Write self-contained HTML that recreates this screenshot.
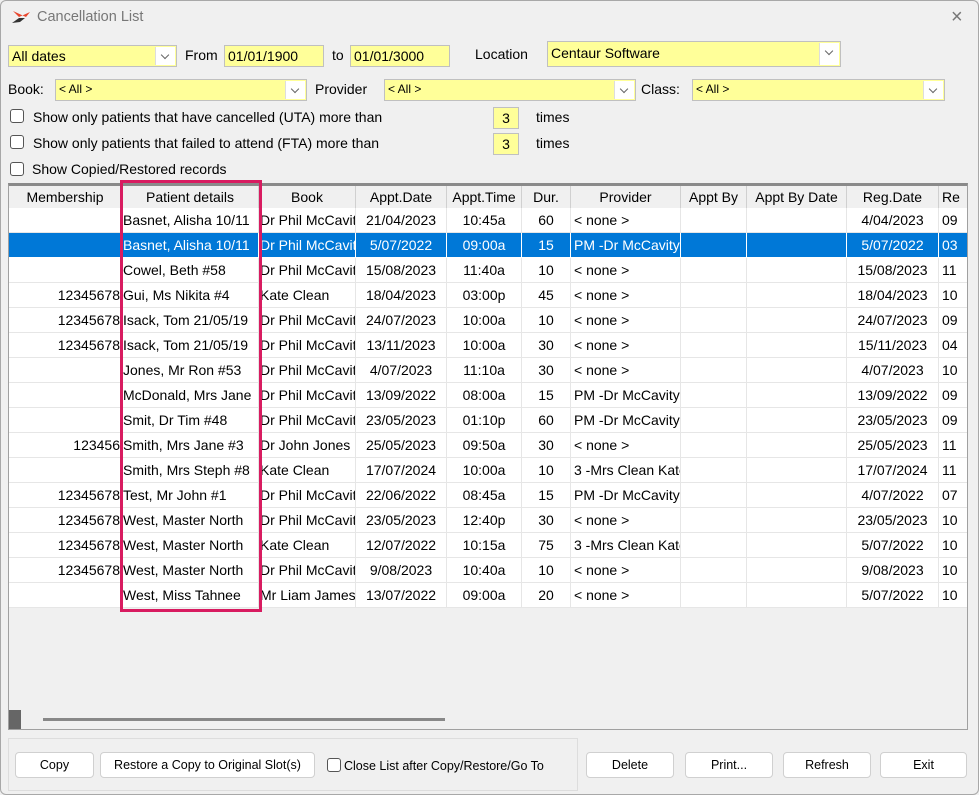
<!DOCTYPE html>
<html><head><meta charset="utf-8"><style>
*{box-sizing:border-box}
body{margin:0;width:979px;height:795px;background:#f0f0f0;font-family:"Liberation Sans",sans-serif;font-size:14px;color:#000;position:relative;overflow:hidden}
.a{position:absolute}
.win{position:absolute;left:0;top:0;width:979px;height:795px;border:1px solid #a8a8a8;border-radius:6px;background:#f0f0f0}
.y{background:#ffff99;border:1px solid #c0c0c0;position:absolute;height:22px;padding:2px 3px;white-space:nowrap;overflow:hidden}
.dd{position:absolute;top:1px;right:1px;width:20px;bottom:1px;background:#fff;border-left:1px solid #ddd}
.dd:after{content:"";position:absolute;left:6px;top:5px;width:5px;height:5px;border-right:1px solid #666;border-bottom:1px solid #666;transform:rotate(45deg)}
.cb{position:absolute;width:14px;height:14px;border:1px solid #555;border-radius:3px;background:#fff}
.tbl{position:absolute;left:8px;top:183px;width:960px;height:547px;border:1px solid #a0a0a0;border-top:3px solid #8a8a8a;background:#f0f0f0;overflow:hidden}
.row{position:absolute;left:0;height:25px;width:960px;background:#fff}
.c{position:absolute;top:0;height:25px;line-height:24px;white-space:nowrap;overflow:hidden;border-right:1px solid #e6e6e6;border-bottom:1px solid #e6e6e6;padding:0 3px}
.h .c{background:#f0f0f0;border-right:1px solid #d0d0d0;border-bottom:2px solid #999;text-align:center;height:24px;line-height:22px}
.sel{background:#0078d7;color:#fff}
.sel .c{border-color:#fff}
.btn{position:absolute;top:752px;height:26px;background:#fff;border:1px solid #d0d0d0;border-radius:4px;font-size:12.5px;text-align:center;line-height:24px}
</style></head><body>
<div class="win"></div>
<svg class="a" style="left:10px;top:9px" width="22" height="16"><path d="M3 2 L9 8 L20 3 L16 8 Z" fill="#e8452c"/><path d="M2 14 L9 9 L15 9 L10 13 Z" fill="#333"/></svg>
<div class="a" style="left:37px;top:9px;color:#777;font-size:14.5px">Cancellation List</div>
<div class="a" style="left:951px;top:6px;color:#777;font-size:20px">×</div>

<div class="y" style="left:8px;top:45px;width:169px">All dates<div class="dd"></div></div>
<div class="a" style="left:185px;top:47px">From</div>
<div class="y" style="left:224px;top:45px;width:100px">01/01/1900</div>
<div class="a" style="left:332px;top:47px">to</div>
<div class="y" style="left:350px;top:45px;width:100px">01/01/3000</div>
<div class="a" style="left:475px;top:46px">Location</div>
<div class="y" style="left:547px;top:41px;width:294px;height:26px;padding-top:3px">Centaur Software<div class="dd"></div></div>

<div class="a" style="left:8px;top:81px">Book:</div>
<div class="y" style="left:55px;top:79px;width:252px;font-size:12px">&lt; All &gt;<div class="dd"></div></div>
<div class="a" style="left:315px;top:81px">Provider</div>
<div class="y" style="left:384px;top:79px;width:252px;font-size:12px">&lt; All &gt;<div class="dd"></div></div>
<div class="a" style="left:641px;top:81px">Class:</div>
<div class="y" style="left:692px;top:79px;width:253px;font-size:12px">&lt; All &gt;<div class="dd"></div></div>

<div class="cb" style="left:10px;top:109px"></div><div class="a" style="left:33px;top:109px">Show only patients that have cancelled (UTA) more than</div>
<div class="y" style="left:493px;top:107px;width:26px;text-align:center">3</div><div class="a" style="left:536px;top:109px">times</div>
<div class="cb" style="left:10px;top:135px"></div><div class="a" style="left:33px;top:135px">Show only patients that failed to attend (FTA) more than</div>
<div class="y" style="left:493px;top:133px;width:26px;text-align:center">3</div><div class="a" style="left:536px;top:135px">times</div>
<div class="cb" style="left:10px;top:162px"></div><div class="a" style="left:32px;top:161px">Show Copied/Restored records</div>

<div class="tbl">
<div class="row h" style="top:0">
<div class="c" style="left:0;width:113px">Membership</div><div class="c" style="left:113px;width:137px">Patient details</div><div class="c" style="left:250px;width:97px">Book</div><div class="c" style="left:347px;width:91px">Appt.Date</div><div class="c" style="left:438px;width:75px">Appt.Time</div><div class="c" style="left:513px;width:49px">Dur.</div><div class="c" style="left:562px;width:110px">Provider</div><div class="c" style="left:672px;width:66px">Appt By</div><div class="c" style="left:738px;width:100px">Appt By Date</div><div class="c" style="left:838px;width:92px">Reg.Date</div><div class="c" style="left:930px;width:40px;text-align:left">Re</div>
</div>
<div id="rows"></div>
<div class="a" style="left:0;top:524px;width:12px;height:20px;background:#666"></div>
<div class="a" style="left:34px;top:532px;width:402px;height:3px;background:#888"></div>
</div>

<div class="a" style="left:8px;top:738px;width:570px;height:53px;border:1px solid #ddd"></div>
<div class="btn" style="left:15px;width:79px">Copy</div>
<div class="btn" style="left:100px;width:215px">Restore a Copy to Original Slot(s)</div>
<div class="cb" style="left:327px;top:758px"></div><div class="a" style="left:344px;top:759px;font-size:12.5px">Close List after Copy/Restore/Go To</div>
<div class="btn" style="left:586px;width:88px">Delete</div>
<div class="btn" style="left:685px;width:88px">Print...</div>
<div class="btn" style="left:783px;width:88px">Refresh</div>
<div class="btn" style="left:880px;width:87px">Exit</div>

<div class="a" style="left:120px;top:180px;width:142px;height:432px;border:3px solid #d81b60"></div>

<script>
var d=[
["","Basnet, Alisha 10/11","Dr Phil McCavity","21/04/2023","10:45a","60","< none >","4/04/2023","09"],
["","Basnet, Alisha 10/11","Dr Phil McCavity","5/07/2022","09:00a","15","PM -Dr McCavity","5/07/2022","03"],
["","Cowel, Beth #58","Dr Phil McCavity","15/08/2023","11:40a","10","< none >","15/08/2023","11"],
["12345678","Gui, Ms Nikita #4","Kate Clean","18/04/2023","03:00p","45","< none >","18/04/2023","10"],
["12345678","Isack, Tom 21/05/19","Dr Phil McCavity","24/07/2023","10:00a","10","< none >","24/07/2023","09"],
["12345678","Isack, Tom 21/05/19","Dr Phil McCavity","13/11/2023","10:00a","30","< none >","15/11/2023","04"],
["","Jones, Mr Ron #53","Dr Phil McCavity","4/07/2023","11:10a","30","< none >","4/07/2023","10"],
["","McDonald, Mrs Jane","Dr Phil McCavity","13/09/2022","08:00a","15","PM -Dr McCavity","13/09/2022","09"],
["","Smit, Dr Tim #48","Dr Phil McCavity","23/05/2023","01:10p","60","PM -Dr McCavity","23/05/2023","09"],
["123456","Smith, Mrs Jane #3","Dr John Jones","25/05/2023","09:50a","30","< none >","25/05/2023","11"],
["","Smith, Mrs Steph #8","Kate Clean","17/07/2024","10:00a","10","3 -Mrs Clean Kate","17/07/2024","11"],
["12345678","Test, Mr John #1","Dr Phil McCavity","22/06/2022","08:45a","15","PM -Dr McCavity","4/07/2022","07"],
["12345678","West, Master North","Dr Phil McCavity","23/05/2023","12:40p","30","< none >","23/05/2023","10"],
["12345678","West, Master North","Kate Clean","12/07/2022","10:15a","75","3 -Mrs Clean Kate","5/07/2022","10"],
["12345678","West, Master North","Dr Phil McCavity","9/08/2023","10:40a","10","< none >","9/08/2023","10"],
["","West, Miss Tahnee","Mr Liam James","13/07/2022","09:00a","20","< none >","5/07/2022","10"]];
var cols=[[0,113,"right"],[113,137,"left"],[250,97,"left"],[347,91,"center"],[438,75,"center"],[513,49,"center"],[562,110,"left"],[672,66,""],[738,100,""],[838,92,"center"],[930,40,"left"]];
var h="";
d.forEach(function(r,i){
 var v=[r[0],r[1],r[2],r[3],r[4],r[5],r[6],"","",r[7],r[8]];
 h+='<div class="row'+(i==1?' sel':'')+'" style="top:'+(22+i*25)+'px">';
 cols.forEach(function(c,j){h+='<div class="c" style="left:'+c[0]+'px;width:'+c[1]+'px;text-align:'+(c[2]||"left")+(j==0||j==1||j==2?';padding:0 1px':'')+'">'+v[j].replace(/</g,"&lt;").replace(/>/g,"&gt;")+'</div>';});
 h+='</div>';});
document.getElementById("rows").innerHTML=h;
</script>
</body></html>
